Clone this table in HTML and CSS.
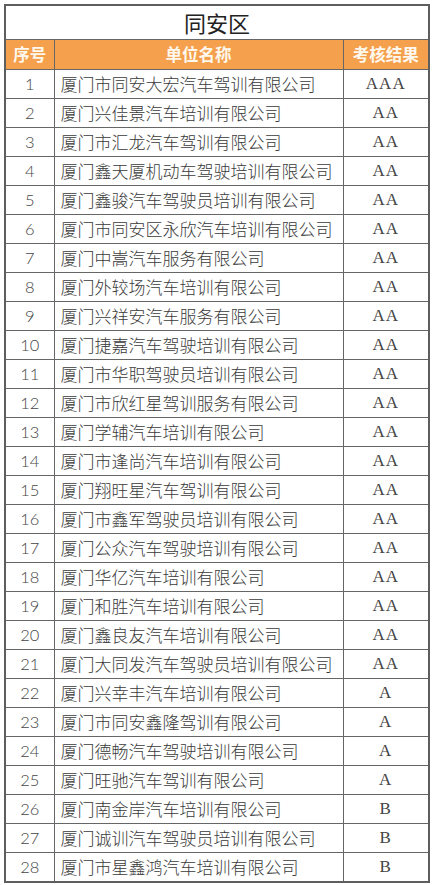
FILE: index.html
```html
<!DOCTYPE html>
<html lang="zh-CN">
<head>
<meta charset="utf-8">
<title>同安区</title>
<link rel="stylesheet" href="styles.css">
</head>
<body>
<table class="sheet">
  <colgroup><col class="c-no"><col class="c-name"><col class="c-res"></colgroup>
  <thead>
    <tr class="title-row"><th colspan="3">同安区</th></tr>
    <tr class="head-row"><th>序号</th><th>单位名称</th><th>考核结果</th></tr>
  </thead>
  <tbody>
    <tr><td class="no">1</td><td class="name">厦门市同安大宏汽车驾训有限公司</td><td class="res">AAA</td></tr>
    <tr><td class="no">2</td><td class="name">厦门兴佳景汽车培训有限公司</td><td class="res">AA</td></tr>
    <tr><td class="no">3</td><td class="name">厦门市汇龙汽车驾训有限公司</td><td class="res">AA</td></tr>
    <tr><td class="no">4</td><td class="name">厦门鑫天厦机动车驾驶培训有限公司</td><td class="res">AA</td></tr>
    <tr><td class="no">5</td><td class="name">厦门鑫骏汽车驾驶员培训有限公司</td><td class="res">AA</td></tr>
    <tr><td class="no">6</td><td class="name">厦门市同安区永欣汽车培训有限公司</td><td class="res">AA</td></tr>
    <tr><td class="no">7</td><td class="name">厦门中嵩汽车服务有限公司</td><td class="res">AA</td></tr>
    <tr><td class="no">8</td><td class="name">厦门外较场汽车培训有限公司</td><td class="res">AA</td></tr>
    <tr><td class="no">9</td><td class="name">厦门兴祥安汽车服务有限公司</td><td class="res">AA</td></tr>
    <tr><td class="no">10</td><td class="name">厦门捷嘉汽车驾驶培训有限公司</td><td class="res">AA</td></tr>
    <tr><td class="no">11</td><td class="name">厦门市华职驾驶员培训有限公司</td><td class="res">AA</td></tr>
    <tr><td class="no">12</td><td class="name">厦门市欣红星驾训服务有限公司</td><td class="res">AA</td></tr>
    <tr><td class="no">13</td><td class="name">厦门学辅汽车培训有限公司</td><td class="res">AA</td></tr>
    <tr><td class="no">14</td><td class="name">厦门市逢尚汽车培训有限公司</td><td class="res">AA</td></tr>
    <tr><td class="no">15</td><td class="name">厦门翔旺星汽车驾训有限公司</td><td class="res">AA</td></tr>
    <tr><td class="no">16</td><td class="name">厦门市鑫军驾驶员培训有限公司</td><td class="res">AA</td></tr>
    <tr><td class="no">17</td><td class="name">厦门公众汽车驾驶培训有限公司</td><td class="res">AA</td></tr>
    <tr><td class="no">18</td><td class="name">厦门华亿汽车培训有限公司</td><td class="res">AA</td></tr>
    <tr><td class="no">19</td><td class="name">厦门和胜汽车培训有限公司</td><td class="res">AA</td></tr>
    <tr><td class="no">20</td><td class="name">厦门鑫良友汽车培训有限公司</td><td class="res">AA</td></tr>
    <tr><td class="no">21</td><td class="name">厦门大同发汽车驾驶员培训有限公司</td><td class="res">AA</td></tr>
    <tr><td class="no">22</td><td class="name">厦门兴幸丰汽车培训有限公司</td><td class="res">A</td></tr>
    <tr><td class="no">23</td><td class="name">厦门市同安鑫隆驾训有限公司</td><td class="res">A</td></tr>
    <tr><td class="no">24</td><td class="name">厦门德畅汽车驾驶培训有限公司</td><td class="res">A</td></tr>
    <tr><td class="no">25</td><td class="name">厦门旺驰汽车驾训有限公司</td><td class="res">A</td></tr>
    <tr><td class="no">26</td><td class="name">厦门南金岸汽车培训有限公司</td><td class="res">B</td></tr>
    <tr><td class="no">27</td><td class="name">厦门诚训汽车驾驶员培训有限公司</td><td class="res">B</td></tr>
    <tr><td class="no">28</td><td class="name">厦门市星鑫鸿汽车培训有限公司</td><td class="res">B</td></tr>
  </tbody>
</table>
</body>
</html>
```
FILE: styles.css
```css
html, body {
  margin: 0;
  padding: 0;
  background: #ffffff;
}

body {
  padding: 4px 0 0 4px;
  font-family: "Noto Sans CJK SC", sans-serif;
  color: #333333;
}

.sheet {
  border-collapse: collapse;
  table-layout: fixed;
  width: 424px;
  border: 2px solid #5e5e5e;
}

.c-no { width: 49px; }
.c-name { width: 289px; }
.c-res { width: 86px; }

.sheet th,
.sheet td {
  border: 1px solid #666666;
  padding: 0;
  white-space: nowrap;
  overflow: hidden;
}

.title-row th {
  height: 33px;
  font-size: 22px;
  font-weight: 400;
  color: #222222;
  background: #ffffff;
  line-height: 33px;
}

.head-row th {
  height: 29px;
  background: #f5a04c;
  color: #fff8ee;
  font-size: 16.5px;
  font-weight: 700;
  line-height: 29px;
}

.sheet td {
  height: 28px;
  line-height: 28px;
}

.no {
  text-align: center;
  font-family: "Lato", "Noto Sans", sans-serif;
  font-weight: 300;
  font-size: 16.5px;
  color: #444444;
}

.name {
  padding-left: 6px !important;
  font-size: 17px;
  font-weight: 300;
  color: #3a3a3a;
}

.res {
  text-align: center;
  font-family: "Liberation Serif", serif;
  font-size: 17px;
  letter-spacing: 1px;
  color: #444444;
}
```
